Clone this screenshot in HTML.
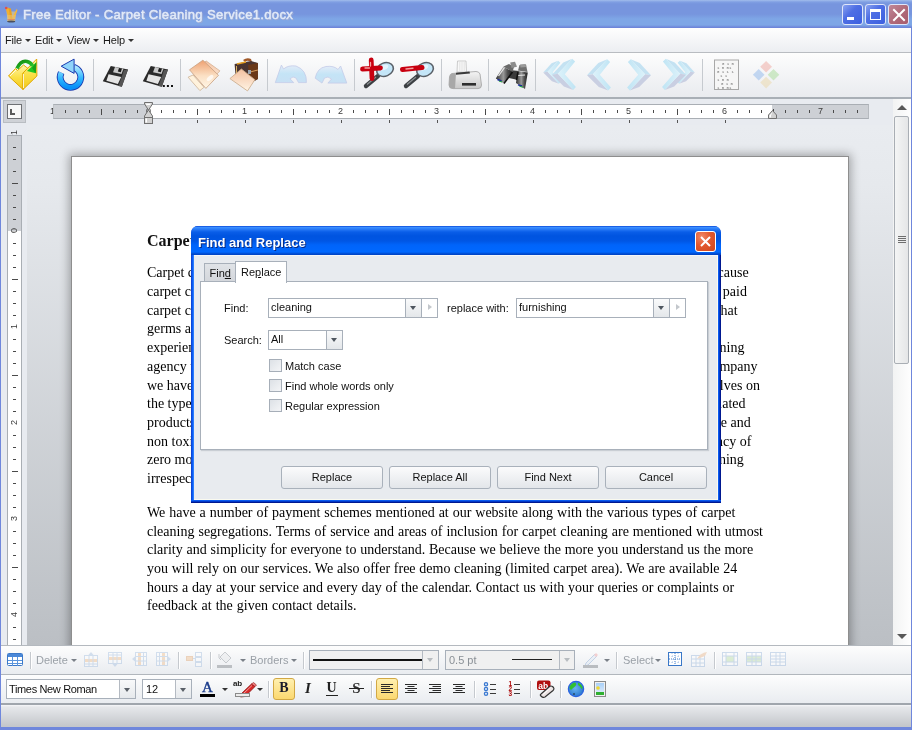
<!DOCTYPE html>
<html><head><meta charset="utf-8">
<style>
*{margin:0;padding:0;box-sizing:border-box}
html,body{width:912px;height:730px;overflow:hidden;background:#fff;}body{will-change:transform;font-family:"Liberation Sans",sans-serif;font-size:11px;color:#000}
.a{position:absolute}
#title{left:0;top:0;width:912px;height:28px;background:linear-gradient(#a2bdec 0px,#809fe3 2px,#7795de 4px,#7795de 14px,#7ea6e6 19px,#7ea6e6 25px,#7089db 27px,#6b82d8 28px)}
#frameL{left:0;top:28px;width:1px;height:702px;background:#6f87dc}
#frameR{left:911px;top:28px;width:1px;height:702px;background:#6f87dc}
#frameB{left:0;top:727px;width:912px;height:3px;background:#6f87dc}
#menu{left:1px;top:28px;width:910px;height:25px;background:linear-gradient(#fefefe,#eceef2);border-bottom:1px solid #b9bcc1}
#tb{left:1px;top:53px;width:910px;height:46px;background:linear-gradient(#fdfdfd,#e9ebef);border-bottom:2px solid #a9afb6}
#rulerrow{left:1px;top:99px;width:910px;height:26px;background:#e8ebf0}
#docbg{left:27px;top:125px;width:866px;height:520px;background:linear-gradient(#e9ecf0 0px,#e6e9ed 60px,#bbbfc4 520px)}
#leftcol{left:1px;top:125px;width:26px;height:520px;background:#e8ebf0}
#page{left:71px;top:156px;width:778px;height:500px;background:#fff;border:1px solid #8e8e8e;border-bottom:none;box-shadow:0 0 9px 2px rgba(0,0,0,.3)}
#vscroll{left:893px;top:99px;width:18px;height:546px;background:linear-gradient(90deg,#f0f1f2,#fdfdfd);border-left:1px solid #c4c8cd}
#tb1{left:1px;top:645px;width:910px;height:30px;background:linear-gradient(#fdfdfd,#e9ecf0);border-top:1px solid #b4b9bf;border-bottom:1px solid #b1b6bc}
#tb2{left:1px;top:675px;width:910px;height:30px;background:linear-gradient(#fdfdfd,#e9ecf0);border-bottom:2px solid #a0a6ad}
#status{left:1px;top:705px;width:910px;height:22px;background:linear-gradient(#f6f7f9 0px,#e6e8eb 2px,#c4c7cb 21px)}
.txt{font-family:"Liberation Serif",serif;font-size:14px;white-space:pre;line-height:18.7px;color:#000}
.wbtn{width:21px;height:21px;border:1px solid #dfe6fa;border-radius:3px;overflow:hidden}
.menu{top:34px;font:11px 'Liberation Sans';color:#1a1a1a;white-space:pre;letter-spacing:-.2px}
.dd{width:0;height:0;border-left:3px solid transparent;border-right:3px solid transparent;border-top:3px solid #333}
.dl{font:11px 'Liberation Sans';color:#111;white-space:pre;line-height:13px}
.combo{height:20px;background:#fff;border:1px solid #a8b0ba}
.cbtn{top:0;width:16px;height:18px;border-left:1px solid #a8b0ba;background:linear-gradient(#f9fafb,#e4e7ea)}
.tri{width:0;height:0;border-left:3.5px solid transparent;border-right:3.5px solid transparent;border-top:4px solid #4e565f}
.rtri{width:0;height:0;border-top:3.5px solid transparent;border-bottom:3.5px solid transparent;border-left:4px solid #c3c7cc}
.chk{width:13px;height:13px;border:1px solid #a6aeb8;background:linear-gradient(135deg,#dde1e6,#f4f5f7)}
.btn{width:102px;height:23px;border:1px solid #a9b1bb;border-radius:3px;background:linear-gradient(#fbfbfc,#e3e6ea);font:11px 'Liberation Sans';color:#111;text-align:center;line-height:21px}
.rnum{font:9px 'Liberation Sans';color:#3a3a3a;width:7px;text-align:center;line-height:11px}
.sep{width:2px;height:17px;border-left:1px solid #c5c9ce;border-right:1px solid #fff}
.tbt{font:11px 'Liberation Sans';white-space:pre;line-height:13px}
.dis{color:#9aa0a7}
.dd2{width:0;height:0;border-left:3px solid transparent;border-right:3px solid transparent;border-top:3px solid #7a8088}
.tri2{width:0;height:0;border-left:3.5px solid transparent;border-right:3.5px solid transparent;border-top:4px solid #b8bcc0}
</style></head><body>
<div id="title" class="a"></div>
<div id="frameL" class="a"></div>
<div id="frameR" class="a"></div>
<div id="menu" class="a"></div>
<div id="tb" class="a"></div>
<div id="rulerrow" class="a"></div>
<div id="docbg" class="a"></div>
<div id="leftcol" class="a"></div>
<div id="page" class="a"></div>
<!-- rulers -->
<div class="a rnum" style="left:49px;top:106px">1</div>
<div class="a" style="left:3px;top:100px;width:23px;height:23px;background:#cfd2d7;border:1px solid #b9bdc2"></div>
<div class="a" style="left:7px;top:104px;width:15px;height:15px;background:#f8f8f8;border:1px solid #6e7074"></div>
<div class="a" style="left:10px;top:109px;width:2px;height:6px;background:#5a5a5a"></div><div class="a" style="left:10px;top:113px;width:5px;height:2px;background:#5a5a5a"></div>
<div class="a" style="left:53px;top:104px;width:816px;height:15px;background:#cdd0d5;border-top:1px solid #a9aeb4;border-bottom:1px solid #a9aeb4;border-left:1px solid #c0c4c8;border-right:1px solid #b6babf"></div>
<div class="a" style="left:149px;top:105px;width:623px;height:13px;background:#fff"></div>
<div class="a" style="left:65px;top:110px;width:1px;height:3px;background:#4a4a4a"></div>
<div class="a" style="left:77px;top:110px;width:1px;height:3px;background:#4a4a4a"></div>
<div class="a" style="left:89px;top:110px;width:1px;height:3px;background:#4a4a4a"></div>
<div class="a" style="left:101px;top:109px;width:1px;height:6px;background:#4a4a4a"></div>
<div class="a" style="left:113px;top:110px;width:1px;height:3px;background:#4a4a4a"></div>
<div class="a" style="left:125px;top:110px;width:1px;height:3px;background:#4a4a4a"></div>
<div class="a" style="left:137px;top:110px;width:1px;height:3px;background:#4a4a4a"></div>
<div class="a rnum" style="left:145px;top:106px">0</div>
<div class="a" style="left:161px;top:110px;width:1px;height:3px;background:#4a4a4a"></div>
<div class="a" style="left:173px;top:110px;width:1px;height:3px;background:#4a4a4a"></div>
<div class="a" style="left:185px;top:110px;width:1px;height:3px;background:#4a4a4a"></div>
<div class="a" style="left:197px;top:109px;width:1px;height:6px;background:#4a4a4a"></div>
<div class="a" style="left:209px;top:110px;width:1px;height:3px;background:#4a4a4a"></div>
<div class="a" style="left:221px;top:110px;width:1px;height:3px;background:#4a4a4a"></div>
<div class="a" style="left:233px;top:110px;width:1px;height:3px;background:#4a4a4a"></div>
<div class="a rnum" style="left:241px;top:106px">1</div>
<div class="a" style="left:257px;top:110px;width:1px;height:3px;background:#4a4a4a"></div>
<div class="a" style="left:269px;top:110px;width:1px;height:3px;background:#4a4a4a"></div>
<div class="a" style="left:281px;top:110px;width:1px;height:3px;background:#4a4a4a"></div>
<div class="a" style="left:293px;top:109px;width:1px;height:6px;background:#4a4a4a"></div>
<div class="a" style="left:305px;top:110px;width:1px;height:3px;background:#4a4a4a"></div>
<div class="a" style="left:317px;top:110px;width:1px;height:3px;background:#4a4a4a"></div>
<div class="a" style="left:329px;top:110px;width:1px;height:3px;background:#4a4a4a"></div>
<div class="a rnum" style="left:337px;top:106px">2</div>
<div class="a" style="left:353px;top:110px;width:1px;height:3px;background:#4a4a4a"></div>
<div class="a" style="left:365px;top:110px;width:1px;height:3px;background:#4a4a4a"></div>
<div class="a" style="left:377px;top:110px;width:1px;height:3px;background:#4a4a4a"></div>
<div class="a" style="left:389px;top:109px;width:1px;height:6px;background:#4a4a4a"></div>
<div class="a" style="left:401px;top:110px;width:1px;height:3px;background:#4a4a4a"></div>
<div class="a" style="left:413px;top:110px;width:1px;height:3px;background:#4a4a4a"></div>
<div class="a" style="left:425px;top:110px;width:1px;height:3px;background:#4a4a4a"></div>
<div class="a rnum" style="left:433px;top:106px">3</div>
<div class="a" style="left:449px;top:110px;width:1px;height:3px;background:#4a4a4a"></div>
<div class="a" style="left:461px;top:110px;width:1px;height:3px;background:#4a4a4a"></div>
<div class="a" style="left:473px;top:110px;width:1px;height:3px;background:#4a4a4a"></div>
<div class="a" style="left:485px;top:109px;width:1px;height:6px;background:#4a4a4a"></div>
<div class="a" style="left:497px;top:110px;width:1px;height:3px;background:#4a4a4a"></div>
<div class="a" style="left:509px;top:110px;width:1px;height:3px;background:#4a4a4a"></div>
<div class="a" style="left:521px;top:110px;width:1px;height:3px;background:#4a4a4a"></div>
<div class="a rnum" style="left:529px;top:106px">4</div>
<div class="a" style="left:545px;top:110px;width:1px;height:3px;background:#4a4a4a"></div>
<div class="a" style="left:557px;top:110px;width:1px;height:3px;background:#4a4a4a"></div>
<div class="a" style="left:569px;top:110px;width:1px;height:3px;background:#4a4a4a"></div>
<div class="a" style="left:581px;top:109px;width:1px;height:6px;background:#4a4a4a"></div>
<div class="a" style="left:593px;top:110px;width:1px;height:3px;background:#4a4a4a"></div>
<div class="a" style="left:605px;top:110px;width:1px;height:3px;background:#4a4a4a"></div>
<div class="a" style="left:617px;top:110px;width:1px;height:3px;background:#4a4a4a"></div>
<div class="a rnum" style="left:625px;top:106px">5</div>
<div class="a" style="left:641px;top:110px;width:1px;height:3px;background:#4a4a4a"></div>
<div class="a" style="left:653px;top:110px;width:1px;height:3px;background:#4a4a4a"></div>
<div class="a" style="left:665px;top:110px;width:1px;height:3px;background:#4a4a4a"></div>
<div class="a" style="left:677px;top:109px;width:1px;height:6px;background:#4a4a4a"></div>
<div class="a" style="left:689px;top:110px;width:1px;height:3px;background:#4a4a4a"></div>
<div class="a" style="left:701px;top:110px;width:1px;height:3px;background:#4a4a4a"></div>
<div class="a" style="left:713px;top:110px;width:1px;height:3px;background:#4a4a4a"></div>
<div class="a rnum" style="left:721px;top:106px">6</div>
<div class="a" style="left:737px;top:110px;width:1px;height:3px;background:#4a4a4a"></div>
<div class="a" style="left:749px;top:110px;width:1px;height:3px;background:#4a4a4a"></div>
<div class="a" style="left:761px;top:110px;width:1px;height:3px;background:#4a4a4a"></div>
<div class="a" style="left:773px;top:109px;width:1px;height:6px;background:#4a4a4a"></div>
<div class="a" style="left:785px;top:110px;width:1px;height:3px;background:#4a4a4a"></div>
<div class="a" style="left:797px;top:110px;width:1px;height:3px;background:#4a4a4a"></div>
<div class="a" style="left:809px;top:110px;width:1px;height:3px;background:#4a4a4a"></div>
<div class="a rnum" style="left:817px;top:106px">7</div>
<div class="a" style="left:833px;top:110px;width:1px;height:3px;background:#4a4a4a"></div>
<div class="a" style="left:845px;top:110px;width:1px;height:3px;background:#4a4a4a"></div>
<div class="a" style="left:857px;top:110px;width:1px;height:3px;background:#4a4a4a"></div>
<div class="a" style="left:197px;top:120px;width:1px;height:3px;background:#555"></div>
<div class="a" style="left:245px;top:120px;width:1px;height:3px;background:#555"></div>
<div class="a" style="left:293px;top:120px;width:1px;height:3px;background:#555"></div>
<div class="a" style="left:341px;top:120px;width:1px;height:3px;background:#555"></div>
<div class="a" style="left:389px;top:120px;width:1px;height:3px;background:#555"></div>
<div class="a" style="left:437px;top:120px;width:1px;height:3px;background:#555"></div>
<div class="a" style="left:485px;top:120px;width:1px;height:3px;background:#555"></div>
<div class="a" style="left:533px;top:120px;width:1px;height:3px;background:#555"></div>
<div class="a" style="left:581px;top:120px;width:1px;height:3px;background:#555"></div>
<div class="a" style="left:629px;top:120px;width:1px;height:3px;background:#555"></div>
<div class="a" style="left:677px;top:120px;width:1px;height:3px;background:#555"></div>
<div class="a" style="left:725px;top:120px;width:1px;height:3px;background:#555"></div>
<svg class="a" style="left:144px;top:102px" width="10" height="22" viewBox="0 0 10 22">
<path d="M0.5 0.5 H8.5 V2 L4.5 8 L0.5 2 Z" fill="#d2d2d2" stroke="#707070"/>
<path d="M4.5 8 L8.5 14 V15.5 H0.5 V14 Z" fill="#d2d2d2" stroke="#707070"/>
<rect x="0.5" y="15.5" width="8" height="6" fill="#d2d2d2" stroke="#707070"/>
<path d="M1.5 1.5 H7 L6 3 H2.5Z M1.5 16.5 V20.5 H3 V16.5Z" fill="#fff"/>
</svg>
<svg class="a" style="left:768px;top:110px" width="10" height="9" viewBox="0 0 10 9">
<path d="M4.5 0.5 L8.5 5 V8.5 H0.5 V5 Z" fill="#d2d2d2" stroke="#707070"/>
<path d="M4.5 2 L1.5 5.5 V7.5 H3 V5.5Z" fill="#fff"/>
</svg>
<div class="a" style="left:7px;top:135px;width:15px;height:520px;background:#fff;border-left:1px solid #a9aeb4;border-right:1px solid #a9aeb4;border-top:1px solid #a9aeb4"></div>
<div class="a" style="left:8px;top:136px;width:13px;height:95px;background:#cdd0d5"></div>
<div class="a" style="left:13px;top:147px;width:3px;height:1px;background:#4a4a4a"></div>
<div class="a" style="left:13px;top:159px;width:3px;height:1px;background:#4a4a4a"></div>
<div class="a" style="left:13px;top:171px;width:3px;height:1px;background:#4a4a4a"></div>
<div class="a" style="left:12px;top:183px;width:6px;height:1px;background:#4a4a4a"></div>
<div class="a" style="left:13px;top:195px;width:3px;height:1px;background:#4a4a4a"></div>
<div class="a" style="left:13px;top:207px;width:3px;height:1px;background:#4a4a4a"></div>
<div class="a" style="left:13px;top:219px;width:3px;height:1px;background:#4a4a4a"></div>
<div class="a rnum" style="left:11px;top:225px;transform:rotate(-90deg)">0</div>
<div class="a" style="left:13px;top:243px;width:3px;height:1px;background:#4a4a4a"></div>
<div class="a" style="left:13px;top:255px;width:3px;height:1px;background:#4a4a4a"></div>
<div class="a" style="left:13px;top:267px;width:3px;height:1px;background:#4a4a4a"></div>
<div class="a" style="left:12px;top:279px;width:6px;height:1px;background:#4a4a4a"></div>
<div class="a" style="left:13px;top:291px;width:3px;height:1px;background:#4a4a4a"></div>
<div class="a" style="left:13px;top:303px;width:3px;height:1px;background:#4a4a4a"></div>
<div class="a" style="left:13px;top:315px;width:3px;height:1px;background:#4a4a4a"></div>
<div class="a rnum" style="left:11px;top:321px;transform:rotate(-90deg)">1</div>
<div class="a" style="left:13px;top:339px;width:3px;height:1px;background:#4a4a4a"></div>
<div class="a" style="left:13px;top:351px;width:3px;height:1px;background:#4a4a4a"></div>
<div class="a" style="left:13px;top:363px;width:3px;height:1px;background:#4a4a4a"></div>
<div class="a" style="left:12px;top:375px;width:6px;height:1px;background:#4a4a4a"></div>
<div class="a" style="left:13px;top:387px;width:3px;height:1px;background:#4a4a4a"></div>
<div class="a" style="left:13px;top:399px;width:3px;height:1px;background:#4a4a4a"></div>
<div class="a" style="left:13px;top:411px;width:3px;height:1px;background:#4a4a4a"></div>
<div class="a rnum" style="left:11px;top:417px;transform:rotate(-90deg)">2</div>
<div class="a" style="left:13px;top:435px;width:3px;height:1px;background:#4a4a4a"></div>
<div class="a" style="left:13px;top:447px;width:3px;height:1px;background:#4a4a4a"></div>
<div class="a" style="left:13px;top:459px;width:3px;height:1px;background:#4a4a4a"></div>
<div class="a" style="left:12px;top:471px;width:6px;height:1px;background:#4a4a4a"></div>
<div class="a" style="left:13px;top:483px;width:3px;height:1px;background:#4a4a4a"></div>
<div class="a" style="left:13px;top:495px;width:3px;height:1px;background:#4a4a4a"></div>
<div class="a" style="left:13px;top:507px;width:3px;height:1px;background:#4a4a4a"></div>
<div class="a rnum" style="left:11px;top:513px;transform:rotate(-90deg)">3</div>
<div class="a" style="left:13px;top:531px;width:3px;height:1px;background:#4a4a4a"></div>
<div class="a" style="left:13px;top:543px;width:3px;height:1px;background:#4a4a4a"></div>
<div class="a" style="left:13px;top:555px;width:3px;height:1px;background:#4a4a4a"></div>
<div class="a" style="left:12px;top:567px;width:6px;height:1px;background:#4a4a4a"></div>
<div class="a" style="left:13px;top:579px;width:3px;height:1px;background:#4a4a4a"></div>
<div class="a" style="left:13px;top:591px;width:3px;height:1px;background:#4a4a4a"></div>
<div class="a" style="left:13px;top:603px;width:3px;height:1px;background:#4a4a4a"></div>
<div class="a rnum" style="left:11px;top:609px;transform:rotate(-90deg)">4</div>
<div class="a" style="left:13px;top:627px;width:3px;height:1px;background:#4a4a4a"></div>
<div class="a" style="left:13px;top:639px;width:3px;height:1px;background:#4a4a4a"></div>
<div class="a rnum" style="left:11px;top:127px;transform:rotate(-90deg)">1</div>


<!-- doc text -->
<div class="a" style="left:147px;top:231.6px;font:bold 16px 'Liberation Serif';line-height:18px;white-space:pre;color:#111">Carpet Cleaning Service</div>
<div class="a txt" style="left:147px;top:264.3px">Carpet cleaning is</div>
<div class="a txt" style="left:147px;top:283.0px">carpet cleaning</div>
<div class="a txt" style="left:147px;top:301.7px">carpet cleaning</div>
<div class="a txt" style="left:147px;top:320.4px">germs and</div>
<div class="a txt" style="left:147px;top:339.1px">experienced</div>
<div class="a txt" style="left:147px;top:357.8px">agency with</div>
<div class="a txt" style="left:147px;top:376.5px">we have</div>
<div class="a txt" style="left:147px;top:395.2px">the types</div>
<div class="a txt" style="left:147px;top:413.9px">products</div>
<div class="a txt" style="left:147px;top:432.6px">non toxic</div>
<div class="a txt" style="left:147px;top:451.3px">zero moisture</div>
<div class="a txt" style="left:147px;top:470.0px">irrespective</div>
<div class="a txt" style="right:163.4px;top:264.3px;text-align:right">because</div>
<div class="a txt" style="right:165.1px;top:283.0px;text-align:right">paid</div>
<div class="a txt" style="right:174.3px;top:301.7px;text-align:right">that</div>
<div class="a txt" style="right:167.5px;top:339.1px;text-align:right">cleaning</div>
<div class="a txt" style="right:154.5px;top:357.8px;text-align:right">company</div>
<div class="a txt" style="right:152.1px;top:376.5px;text-align:right">themselves on</div>
<div class="a txt" style="right:166.5px;top:395.2px;text-align:right">formulated</div>
<div class="a txt" style="right:161.3px;top:413.9px;text-align:right">safe and</div>
<div class="a txt" style="right:160.6px;top:432.6px;text-align:right">efficacy of</div>
<div class="a txt" style="right:168.2px;top:451.3px;text-align:right">cleaning</div>
<div class="a txt" style="left:147px;top:503.9px;word-spacing:0.44px">We have a number of payment schemes mentioned at our website along with the various types of carpet</div>
<div class="a txt" style="left:147px;top:522.6px;word-spacing:0.51px">cleaning segregations. Terms of service and areas of inclusion for carpet cleaning are mentioned with utmost</div>
<div class="a txt" style="left:147px;top:541.3px;word-spacing:0.30px">clarity and simplicity for everyone to understand. Because we believe the more you understand us the more</div>
<div class="a txt" style="left:147px;top:560.0px;word-spacing:0.22px">you will rely on our services. We also offer free demo cleaning (limited carpet area). We are available 24</div>
<div class="a txt" style="left:147px;top:578.7px;word-spacing:0.29px">hours a day at your service and every day of the calendar. Contact us with your queries or complaints or</div>
<div class="a txt" style="left:147px;top:597.4px;word-spacing:0.54px">feedback at the given contact details.</div>

<!-- dialog -->
<div class="a" id="dlg" style="left:191px;top:226px;width:530px;height:277px;background:#0a3fd0;border-radius:7px 7px 0 0;overflow:hidden">
 <div class="a" style="left:0;top:0;width:530px;height:29px;background:linear-gradient(#0a48d8 0px,#3a8eff 1.5px,#2a7cf8 3px,#0a5ee8 6px,#0054e0 10px,#0056e4 15px,#0064fa 19px,#0068ff 26px,#0050d8 27.5px,#0040c0 29px)"></div>
 <div class="a" style="left:0;top:29px;width:3px;height:248px;background:linear-gradient(90deg,#0a46d8 0,#0a46d8 33%,#0c5cf4 33%,#0c5cf4 66%,#2a7cff 66%)"></div>
 <div class="a" style="left:527px;top:29px;width:3px;height:248px;background:linear-gradient(90deg,#0a5af0 0,#0a5af0 33%,#0038c8 33%,#0038c8 66%,#001890 66%)"></div>
 <div class="a" style="left:0;top:274px;width:530px;height:3px;background:linear-gradient(#0a5af0 0,#0a5af0 33%,#0038c8 33%,#0038c8 66%,#001890 66%)"></div>
 <div class="a" style="left:3px;top:29px;width:524px;height:245px;background:#e8ebef;border-top:1px solid #f4f6f8;border-right:1px solid #fafaf4;border-bottom:1px solid #fafaf0"></div>
 <div class="a" style="left:8px;top:9.5px;font:bold 13px 'Liberation Sans';color:#0a2a80;white-space:pre">Find and Replace</div>
 <div class="a" style="left:7px;top:8.5px;font:bold 13px 'Liberation Sans';color:#fff;white-space:pre">Find and Replace</div>
 <div class="a" style="left:504px;top:5px;width:21px;height:21px;border:1px solid #fff;border-radius:3px;background:radial-gradient(circle at 30% 25%,#f08868 0%,#e2582e 45%,#d0461c 100%)">
  <svg class="a" style="left:3px;top:3px" width="13" height="13" viewBox="0 0 13 13"><path d="M2 2 L11 11 M11 2 L2 11" stroke="#fff" stroke-width="2"/></svg>
 </div>
 <!-- tabs -->
 <div class="a" style="left:13px;top:37px;width:32px;height:19px;background:linear-gradient(#e0e3e7,#d3d6db);border:1px solid #a8b0ba;border-bottom:none"></div>
 <div class="a dl" style="left:18.5px;top:40.5px">Fin<u>d</u></div>
 <div class="a" style="left:9px;top:55px;width:508px;height:169px;background:#fff;border:1px solid #a8b0ba;box-shadow:1px 1px 1px #c9ced4"></div>
 <div class="a" style="left:44px;top:35px;width:52px;height:22px;background:#fff;border:1px solid #a8b0ba;border-bottom:none"></div>
 <div class="a dl" style="left:50px;top:40px">Re<u>p</u>lace</div>
 <!-- fields -->
 <div class="a dl" style="left:33px;top:76px">Find:</div>
 <div class="a combo" style="left:77px;top:72px;width:170px">
   <div class="a" style="left:2px;top:2px" ><span class="dl">cleaning</span></div>
   <div class="a cbtn" style="left:136px"><div class="a tri" style="left:4px;top:7px"></div></div>
   <div class="a" style="left:152px;top:0;width:16px;height:18px;border-left:1px solid #a8b0ba"><div class="a rtri" style="left:6px;top:5px"></div></div>
 </div>
 <div class="a dl" style="left:256px;top:76px">replace with:</div>
 <div class="a combo" style="left:325px;top:72px;width:170px">
   <div class="a" style="left:2px;top:2px"><span class="dl">furnishing</span></div>
   <div class="a cbtn" style="left:136px"><div class="a tri" style="left:4px;top:7px"></div></div>
   <div class="a" style="left:152px;top:0;width:16px;height:18px;border-left:1px solid #a8b0ba"><div class="a rtri" style="left:6px;top:5px"></div></div>
 </div>
 <div class="a dl" style="left:33px;top:108px">Search:</div>
 <div class="a combo" style="left:77px;top:104px;width:75px">
   <div class="a" style="left:2px;top:2px"><span class="dl">All</span></div>
   <div class="a cbtn" style="left:57px;width:16px;border-right:none"><div class="a tri" style="left:4px;top:7px"></div></div>
 </div>
 <div class="a chk" style="left:78px;top:133px"></div><div class="a dl" style="left:94px;top:134px">Match case</div>
 <div class="a chk" style="left:78px;top:153px"></div><div class="a dl" style="left:94px;top:154px">Find whole words only</div>
 <div class="a chk" style="left:78px;top:173px"></div><div class="a dl" style="left:94px;top:174px">Regular expression</div>
 <!-- buttons -->
 <div class="a btn" style="left:90px;top:240px">Replace</div>
 <div class="a btn" style="left:198px;top:240px">Replace All</div>
 <div class="a btn" style="left:306px;top:240px">Find Next</div>
 <div class="a btn" style="left:414px;top:240px">Cancel</div>
</div>

<div class="a" style="left:893px;top:99px;width:18px;height:546px;background:linear-gradient(90deg,#f2f3f3,#fefefe)"></div>
<div class="a" style="left:897px;top:105px;width:0;height:0;border-left:5px solid transparent;border-right:5px solid transparent;border-bottom:5px solid #585858"></div>
<div class="a" style="left:897px;top:634px;width:0;height:0;border-left:5px solid transparent;border-right:5px solid transparent;border-top:5px solid #585858"></div>
<div class="a" style="left:894px;top:116px;width:15px;height:248px;border:1px solid #a9aeb4;border-radius:2px;background:linear-gradient(90deg,#f4f5f5,#e5e6e7)"></div>
<div class="a" style="left:898px;top:236px;width:8px;height:1px;background:#6e6e6e;box-shadow:0 2px 0 #6e6e6e,0 4px 0 #6e6e6e,0 6px 0 #6e6e6e"></div>

<div id="tb1" class="a"></div>
<div id="tb2" class="a"></div>
<div id="status" class="a"></div>

<!-- title -->
<svg class="a" style="left:4px;top:6px" width="14" height="17" viewBox="0 0 14 17">
<path d="M2.5 5.5 L12 5.5 L11 15.5 L3.5 15.5 Z" fill="#d8c890" opacity=".7"/>
<path d="M1.5 2 L5 14 L7.5 14 L4.5 1.5 Z" fill="#f2b030"/>
<path d="M12.5 3 L7.5 14 L10 14 L13.5 4 Z" fill="#f6b838"/>
<path d="M4.5 2 L6.5 13 L8.5 13 L7 2.5 Z" fill="#eaa020"/>
<path d="M3 9 L11.8 9 L11 15.5 L3.5 15.5 Z" fill="#e8c070" opacity=".6"/>
<circle cx="2.2" cy="2" r="1.3" fill="#e05050"/>
<ellipse cx="7.2" cy="15.5" rx="4" ry="1.1" fill="#4a5060"/>
<path d="M3.5 13.5 H11" stroke="#d06060" stroke-width=".8" opacity=".6"/>
</svg>
<div class="a" style="left:24px;top:8px;font:13px 'Liberation Sans';letter-spacing:.35px;-webkit-text-stroke:.45px #98a8d4;color:#98a8d4;white-space:pre">Free Editor - Carpet Cleaning Service1.docx</div>
<div class="a" style="left:23px;top:7px;font:13px 'Liberation Sans';letter-spacing:.35px;-webkit-text-stroke:.45px #e2eaf8;color:#e2eaf8;white-space:pre">Free Editor - Carpet Cleaning Service1.docx</div>
<div class="a wbtn" style="left:842px;top:4px;background:linear-gradient(135deg,#8aa3f0 0%,#4f6fe4 40%,#3c5fe0 100%)"><div class="a" style="left:4px;top:12px;width:7px;height:3px;background:#fff"></div></div>
<div class="a wbtn" style="left:865px;top:4px;background:linear-gradient(135deg,#8aa3f0 0%,#4f6fe4 40%,#3c5fe0 100%)"><div class="a" style="left:4px;top:4px;width:11px;height:11px;border:1px solid #fff;border-top-width:3px"></div></div>
<div class="a wbtn" style="left:888px;top:4px;background:linear-gradient(135deg,#c08898 0%,#b06a7a 50%,#a85c6c 100%)">
<svg class="a" style="left:3px;top:3px" width="14" height="14" viewBox="0 0 14 14"><path d="M2 2 L12 12 M12 2 L2 12" stroke="#fff" stroke-width="2" stroke-linecap="square"/></svg></div>
<!-- menu -->
<div class="a menu" style="left:5px">File</div><div class="a dd" style="left:25px;top:39px"></div>
<div class="a menu" style="left:35px">Edit</div><div class="a dd" style="left:56px;top:39px"></div>
<div class="a menu" style="left:67px">View</div><div class="a dd" style="left:93px;top:39px"></div>
<div class="a menu" style="left:103px">Help</div><div class="a dd" style="left:128px;top:39px"></div>


<!-- top toolbar icons -->
<svg class="a" style="left:0;top:53px" width="800" height="44" viewBox="0 53 800 44">
<defs>
<linearGradient id="fy" x1="0" y1="0" x2="0" y2="1"><stop offset="0" stop-color="#fff4a8"/><stop offset=".5" stop-color="#fbe048"/><stop offset="1" stop-color="#f2c818"/></linearGradient>
<linearGradient id="fg" x1="0" y1="0" x2="1" y2="1"><stop offset="0" stop-color="#108a10"/><stop offset="1" stop-color="#30d030"/></linearGradient>
<linearGradient id="rb" x1="0" y1="0" x2="0" y2="1"><stop offset="0" stop-color="#a8e4ff"/><stop offset=".55" stop-color="#30b8ff"/><stop offset="1" stop-color="#0890f8"/></linearGradient>
<linearGradient id="pg" x1="0" y1="0" x2="0" y2="1"><stop offset="0" stop-color="#eea070"/><stop offset=".55" stop-color="#fbe0c4"/><stop offset="1" stop-color="#fff6e6"/></linearGradient>
<linearGradient id="pb" x1="0" y1="0" x2="0" y2="1"><stop offset="0" stop-color="#f4c0a0"/><stop offset="1" stop-color="#fff4e4"/></linearGradient>
<linearGradient id="ub" x1="0" y1="0" x2="0" y2="1"><stop offset="0" stop-color="#e4ecf8"/><stop offset=".5" stop-color="#c4e4f6"/><stop offset="1" stop-color="#c8e0f4"/></linearGradient>
<linearGradient id="pr" x1="0" y1="0" x2="0" y2="1"><stop offset="0" stop-color="#f4f4f4"/><stop offset="1" stop-color="#c8c8c8"/></linearGradient>
<linearGradient id="chv" x1="0" y1="0" x2="1" y2="0"><stop offset="0" stop-color="#bfe0f0"/><stop offset="1" stop-color="#d8f0fa"/></linearGradient>
</defs>
<!-- separators -->
<g stroke="#c6cacf" stroke-width="1">
<path d="M46.5 59 V91 M93.5 59 V91 M180.5 59 V91 M267.5 59 V91 M354.5 59 V91 M441.5 59 V91 M488.5 59 V91 M535.5 59 V91 M702.5 59 V91"/>
</g>
<!-- open folder -->
<path d="M8.5 76 L15.5 68.5 L17.5 70.5 L23.5 65 L28 68.5 L23 73 L23 89.5 Z" fill="url(#fy)" stroke="#e0a800" stroke-width="1"/>
<path d="M23 73 L36.7 59 L36.9 76 L23 89.5 Z" fill="url(#fy)" stroke="#e0a800" stroke-width="1"/>
<path d="M10 76 L16 70 M23.5 74 V88" stroke="#fff" stroke-width="1" opacity=".8"/>
<path d="M17 68.5 Q21 60 27 61.5 Q31 62.5 32.5 66" fill="none" stroke="url(#fg)" stroke-width="3.6"/>
<path d="M36.3 62.3 L35.8 73.3 L27 70.9 Z" fill="#22c822"/>
<path d="M36.3 62.3 L35.8 73.3 L32 68 Z" fill="#18a018"/>
<!-- refresh -->
<path d="M61.2 72.6 A10.3 10.3 0 1 0 73.8 67.3" fill="none" stroke="#1a3cb0" stroke-width="6.8"/>
<path d="M61.2 72.6 A10.3 10.3 0 1 0 73.8 67.3" fill="none" stroke="url(#rb)" stroke-width="5"/>
<path d="M61.2 66.2 L74.1 59.1 L74.1 73.4 Z" fill="#90d4fa" stroke="#1a3cb0" stroke-width="1"/>
<!-- save -->
<g id="flop">
<path d="M110.8 66 L128 69.5 L121.8 86.8 L102.8 81.3 Z" fill="#2a2a2a"/>
<path d="M115 67 L123.5 68.7 L121.5 74 L113 72.3 Z" fill="#c8c8c8"/>
<path d="M119 68 L122 68.6 L120.8 72.2 L117.8 71.6Z" fill="#1a1a1a"/>
<path d="M108.6 74.2 L121.2 76.9 L117.9 84 L106.4 80.8 Z" fill="#e4e4e4"/>
<path d="M124 70 L128 69.5 L121.8 86.8 L118.5 86 Z" fill="#555"/>
</g>
<use href="#flop" x="40" y="0"/>
<rect x="162.8" y="85" width="2" height="2" fill="#111"/><rect x="166.9" y="85" width="2" height="2" fill="#111"/><rect x="171" y="85" width="2" height="2" fill="#111"/>
<!-- pages -->
<path d="M188.1 77.2 L193 75 L204 87.3 L199.9 90.6 Z" fill="#fff2dc" stroke="#cdb498" stroke-width=".8"/>
<path d="M206.2 61 L219.9 70.9 L210 81 L196 68 Z" fill="url(#pb)" stroke="#d4b090" stroke-width=".8"/>
<path d="M202.9 60.2 L218.5 75.3 L205.9 88.4 L189.5 69.8 Z" fill="url(#pg)" stroke="#c8a080" stroke-width=".8"/>
<ellipse cx="210" cy="78" rx="4" ry="2" fill="#fff" opacity=".7" transform="rotate(-40 210 78)"/>
<!-- briefcase -->
<path d="M243 60 Q247 57 251 59 L252 62 L249 61 Q247 60 245 62 Z" fill="#a05828"/>
<path d="M234.6 64 L251 61 L257.9 63 L257.9 79 L251 83 L236 81 Z" fill="#4a3430"/>
<path d="M248 65 L257.9 63 L257.9 79 L250 83 Z" fill="#6a3818"/>
<path d="M250 72 L257.9 70" stroke="#d8a060" stroke-width="1"/>
<path d="M237 64 L246 62" stroke="#e8a020" stroke-width="1.4"/>
<path d="M236.5 66 V78" stroke="#d8b060" stroke-width="1"/>
<rect x="248" y="70" width="3" height="4" fill="#9aa4b0"/>
<path d="M229.9 78.6 L241.4 69 L254.9 79.7 L247.5 90.9 Z" fill="url(#pb)" stroke="#c8a888" stroke-width=".8"/>
<!-- undo/redo disabled -->
<path d="M281.4 65.1 L275.3 82.6 L293.7 82.6 L290 78.8 Q293 75.5 296 78 L298.5 82.6 L306.4 82.6 Q307 70 296 66 Q288 65 283.6 69 Z" fill="url(#ub)" stroke="#c4cce8" stroke-width=".8"/>
<path d="M340.6 66 L346.8 83.1 L327.9 83.1 L331.5 79 Q328 75.5 324.5 78 L322 83.1 L315.2 78.2 Q317 68 326 66.5 Q334 65.5 338 69.5 Z" fill="url(#ub)" stroke="#c4cce8" stroke-width=".8"/>
<!-- zoom in -->
<g id="zin">
<path d="M366 86 L378 76" stroke="#3c4044" stroke-width="4.4" stroke-linecap="round"/>
<path d="M367 84.5 L376 77" stroke="#8a8e92" stroke-width="1.2"/>
<ellipse cx="385" cy="69.5" rx="9.4" ry="7.4" fill="#5a6068" transform="rotate(-22 385 69.5)"/>
<ellipse cx="385" cy="69.5" rx="7.8" ry="5.9" fill="#c4e6f8" transform="rotate(-22 385 69.5)"/>
<ellipse cx="384" cy="67.5" rx="4.5" ry="2.4" fill="#eef8ff" opacity=".8" transform="rotate(-22 384 67.5)"/>
</g>
<path d="M362.5 69 L380.5 68" stroke="#c80010" stroke-width="4.8" stroke-linecap="round"/>
<path d="M371.2 60 L372 78.5" stroke="#c80010" stroke-width="4.8" stroke-linecap="round"/>
<path d="M365 68 H369.5 M370.5 62.5 V66" stroke="#f4a0a0" stroke-width="1.3" stroke-linecap="round"/>
<!-- zoom out -->
<use href="#zin" x="40" y="0"/>
<path d="M402.5 69.5 L422 67.5" stroke="#c80010" stroke-width="5" stroke-linecap="round"/>
<path d="M406 69 L413 68.2" stroke="#f4a0a0" stroke-width="1.4" stroke-linecap="round"/>
<!-- printer -->
<path d="M457.5 61 H466 L466.5 72 H457 Z" fill="#f8f8f8" stroke="#c0c0c0" stroke-width=".8"/>
<path d="M459.8 62 V71 M462 62 V71 M464.2 62 V71" stroke="#d4d4d4" stroke-width=".6"/>
<path d="M452 73.5 L476 71.5 Q479 71.5 480 74 L481.5 85 Q481.5 88.6 478 88.6 L453 88.6 Q449 88.6 449 85 L449.5 77 Q450 73.8 452 73.5 Z" fill="url(#pr)" stroke="#a0a0a0" stroke-width=".8"/>
<path d="M449.5 77 Q450 73.8 452 73.5 L456 73.2 L455 88.6 L453 88.6 Q449 88.6 449 85 Z" fill="#a8a8a8"/>
<path d="M456 72.8 L469.5 71.6 L470 73.6 L456 74.8Z" fill="#3a3a3a"/>
<rect x="462" y="83" width="14" height="2.6" fill="#2e2e2e"/>
<!-- binoculars -->
<defs><linearGradient id="bn" x1="0" y1="0" x2="1" y2="0"><stop offset="0" stop-color="#303030"/><stop offset=".45" stop-color="#9a9a9a"/><stop offset=".7" stop-color="#505050"/><stop offset="1" stop-color="#202020"/></linearGradient></defs>
<g transform="translate(492 58)">
<path d="M17 12 L27 13 L26 22 L17 20 Z" fill="#3a3a3a"/>
<path d="M3.8 20.5 L11.5 8.5 L20.5 14 L12 25.5 Z" fill="url(#bn)"/>
<path d="M11.5 8.5 L17 6 L22 9 L20.5 14 Z" fill="#6a6a6a"/>
<path d="M18.2 4.5 L23 3.8 L25 8.8 L19.5 10 Z" fill="#8c8c8c"/>
<path d="M24 25 L25.5 13 L35.8 14.5 L33 31 Z" fill="url(#bn)"/>
<path d="M26 12.5 L27.5 7 L34 6.5 L35.5 14 Z" fill="#707070"/>
<path d="M28 6.5 L33.5 6 L34 9 L28.5 9.5Z" fill="#9a9a9a"/>
<path d="M6.5 18 L12.5 9.5" stroke="#e8e8e8" stroke-width="1.3"/>
<path d="M25.5 17.5 L33 17" stroke="#e8e8e8" stroke-width="1.2"/>
<path d="M12 25.5 L20.5 14" stroke="#111" stroke-width="1.5"/>
<path d="M24.5 22 L26 14" stroke="#111" stroke-width="1.5"/>
<path d="M5.5 21.5 L9.5 23" stroke="#1a2aa0" stroke-width="1.4"/><path d="M7 23 L10 24" stroke="#20a040" stroke-width="1.2"/>
<path d="M26 26.8 L30 28" stroke="#1a2aa0" stroke-width="1.4"/><path d="M27.5 28.2 L31 29.3" stroke="#20a040" stroke-width="1.2"/>
</g>
<!-- chevrons -->
<defs>
<linearGradient id="cf" x1="0" y1="0" x2="1" y2="0"><stop offset="0" stop-color="#dcf2fa"/><stop offset="1" stop-color="#bfe4f4"/></linearGradient>
<g id="chev1">
<path d="M3 18.3 L14.3 5.9 L23.2 2.2 L8.9 17.3 Z" fill="#c4e2f2"/>
<path d="M3 18.3 L8.9 17.3 L24.2 33.5 L14.8 30.1 Z" fill="#c9cfe2"/>
<path d="M8.9 17.3 L23.2 2.2 L26.1 4.9 L15.8 17.8 L26.9 30.6 L24.2 33.5 Z" fill="url(#cf)"/>
</g>
<g id="chev2">
<g transform="translate(-43 2) scale(.74)"><use href="#chev1"/></g>
<use href="#chev1" x="-35" y="-0.5"/>
</g>
</defs>
<g transform="translate(584 57)"><use href="#chev1"/><use href="#chev2"/></g>
<g transform="translate(1238 0) scale(-1 1) translate(584 57)"><use href="#chev1"/><use href="#chev2"/></g>
<!-- binary doc -->
<rect x="714.5" y="60" width="24" height="29.5" fill="#f6f6f6" stroke="#a8a8a8"/>
<g fill="#707070" font-family="'Liberation Mono',monospace" font-size="4">
<text x="722" y="65">0 1  0</text><text x="717" y="69">1 0 01</text><text x="717" y="73">0 1 1 1</text><text x="720" y="77">1 1</text><text x="717" y="81">1 0 0</text><text x="721" y="85">0 1  0</text><text x="717" y="89">1 0 01</text>
</g>
<!-- color diamond -->
<g opacity=".5">
<path d="M766.1 61 L772 66.8 L766.1 72.6 L760.2 66.8Z" fill="#f0a8a0"/>
<path d="M758.7 68.9 L764.5 74.7 L758.7 80.5 L752.9 74.7Z" fill="#90b8ec"/>
<path d="M773.5 68.9 L779.3 74.7 L773.5 80.5 L767.7 74.7Z" fill="#a8dc98"/>
<path d="M766.1 76.8 L772 82.6 L766.1 88.4 L760.2 82.6Z" fill="#ecd8a8"/>
</g>
</svg>
<!-- bottom toolbar 1 -->
<svg class="a" style="left:7px;top:653px" width="17" height="14" viewBox="0 0 17 14">
<rect x="0.5" y="0.5" width="15" height="12" rx="1" fill="#fff" stroke="#3a78c8"/>
<rect x="1" y="1" width="14" height="3" fill="#4a88d8"/>
<path d="M1 7.5 H15 M1 10.5 H15 M5.5 4 V13 M10.5 4 V13" stroke="#5a94dc" stroke-width="1"/>
</svg>
<div class="a sep" style="left:30px;top:652px"></div>
<div class="a tbt dis" style="left:36px;top:654px">Delete</div><div class="a dd2" style="left:71px;top:659px"></div>
<svg class="a" style="left:84px;top:652px" width="14" height="15" viewBox="0 0 14 15" opacity=".35">
<rect x="0.5" y="3.5" width="13" height="11" fill="#fff" stroke="#8fb0d8"/><rect x="1" y="7" width="12" height="3" fill="#f0b070"/><path d="M7 0 L4.5 3 H9.5Z" fill="#8fb0d8"/><path d="M1 12 H13 M5 4 V14 M9 4 V14" stroke="#8fb0d8"/></svg>
<svg class="a" style="left:108px;top:652px" width="14" height="15" viewBox="0 0 14 15" opacity=".35">
<rect x="0.5" y="0.5" width="13" height="11" fill="#fff" stroke="#8fb0d8"/><rect x="1" y="5" width="12" height="3" fill="#f0b070"/><path d="M7 15 L4.5 12 H9.5Z" fill="#8fb0d8"/><path d="M1 3 H13 M5 1 V11 M9 1 V11" stroke="#8fb0d8"/></svg>
<svg class="a" style="left:132px;top:652px" width="15" height="15" viewBox="0 0 15 15" opacity=".35">
<rect x="3.5" y="0.5" width="11" height="13" fill="#fff" stroke="#8fb0d8"/><rect x="6" y="1" width="3" height="12" fill="#f0b070"/><path d="M0 7 L3 4.5 V9.5Z" fill="#8fb0d8"/><path d="M4 4.5 H14 M4 9 H14 M11.5 1 V13" stroke="#8fb0d8"/></svg>
<svg class="a" style="left:156px;top:652px" width="15" height="15" viewBox="0 0 15 15" opacity=".35">
<rect x="0.5" y="0.5" width="11" height="13" fill="#fff" stroke="#8fb0d8"/><rect x="6" y="1" width="3" height="12" fill="#f0b070"/><path d="M15 7 L12 4.5 V9.5Z" fill="#8fb0d8"/><path d="M1 4.5 H11 M1 9 H11 M3.5 1 V13" stroke="#8fb0d8"/></svg>
<div class="a sep" style="left:178px;top:652px"></div>
<svg class="a" style="left:186px;top:652px" width="16" height="15" viewBox="0 0 16 15" opacity=".35">
<rect x="0.5" y="4.5" width="6" height="4" fill="#f0b070" stroke="#d89050"/><rect x="9.5" y="0.5" width="6" height="4" fill="#fff" stroke="#8fb0d8"/><rect x="9.5" y="5.5" width="6" height="4" fill="#fff" stroke="#8fb0d8"/><rect x="9.5" y="10.5" width="6" height="4" fill="#fff" stroke="#8fb0d8"/><path d="M7 6.5 H9" stroke="#8fb0d8"/></svg>
<div class="a sep" style="left:210px;top:652px"></div>
<svg class="a" style="left:217px;top:651px" width="16" height="18" viewBox="0 0 16 18" opacity=".5">
<path d="M3 6 L8 1 L14 7 L9 12 Z" fill="#e8eaec" stroke="#9aa0a6"/><path d="M2 3 Q1 8 4 9" stroke="#9aa0a6" fill="none"/><rect x="0" y="14" width="15" height="3" fill="#8a8f94"/></svg>
<div class="a dd2" style="left:240px;top:659px"></div>
<div class="a tbt dis" style="left:250px;top:654px">Borders</div><div class="a dd2" style="left:291px;top:659px"></div>
<div class="a sep" style="left:303px;top:652px"></div>
<div class="a" style="left:309px;top:650px;width:130px;height:20px;background:#f0f0f0;border:1px solid #a8b0ba"></div>
<div class="a" style="left:313px;top:659px;width:109px;height:2px;background:#111"></div>
<div class="a" style="left:422px;top:651px;width:1px;height:18px;background:#b4bac2"></div>
<div class="a tri2" style="left:427px;top:658px"></div>
<div class="a" style="left:445px;top:650px;width:130px;height:20px;background:#f0f0f0;border:1px solid #a8b0ba"></div>
<div class="a tbt" style="left:449px;top:654px;color:#8a9096">0.5 pt</div>
<div class="a" style="left:512px;top:659px;width:40px;height:1px;background:#222"></div>
<div class="a" style="left:559px;top:651px;width:1px;height:18px;background:#b4bac2"></div>
<div class="a tri2" style="left:564px;top:658px"></div>
<svg class="a" style="left:583px;top:651px" width="15" height="18" viewBox="0 0 15 18" opacity=".45">
<path d="M3 12 L12 3 L14 5 L5 14 L2 15 Z" fill="#dfe8f4" stroke="#8aa8d0"/><path d="M11 4 L13 2 L15 4 L13 6Z" fill="#f0a0a0"/><rect x="0" y="14" width="15" height="3" fill="#7a7f84"/></svg>
<div class="a dd2" style="left:604px;top:659px"></div>
<div class="a sep" style="left:616px;top:652px"></div>
<div class="a tbt dis" style="left:623px;top:654px">Select</div><div class="a dd2" style="left:655px;top:659px"></div>
<svg class="a" style="left:668px;top:652px" width="14" height="15" viewBox="0 0 14 15">
<rect x="0.5" y="0.5" width="13" height="13" fill="#fff" stroke="#3a78c8"/><path d="M1 7 H13 M7 1 V13" stroke="#3a78c8" stroke-dasharray="1 1"/><path d="M1 4 H13 M1 10 H13 M4 1 V13 M10 1 V13" stroke="#a8c4e8" stroke-dasharray="1 2"/></svg>
<svg class="a" style="left:691px;top:651px" width="17" height="17" viewBox="0 0 17 17" opacity=".4">
<rect x="0.5" y="4.5" width="13" height="11" fill="#fff" stroke="#8fb0d8"/><path d="M1 8 H13 M1 12 H13 M5 5 V15 M9 5 V15" stroke="#8fb0d8"/><path d="M6 8 Q9 2 16 1 L14 5 Z" fill="#e8b080"/></svg>
<div class="a sep" style="left:714px;top:652px"></div>
<svg class="a" style="left:722px;top:652px" width="16" height="15" viewBox="0 0 16 15" opacity=".4">
<rect x="0.5" y="0.5" width="15" height="13" fill="#fff" stroke="#8fb0d8"/><rect x="4" y="4" width="8" height="6" fill="#b8e0a0"/><path d="M1 4 H15 M1 10 H15 M4 1 V13 M12 1 V13" stroke="#8fb0d8"/></svg>
<svg class="a" style="left:746px;top:652px" width="16" height="15" viewBox="0 0 16 15" opacity=".4">
<rect x="0.5" y="0.5" width="15" height="13" fill="#fff" stroke="#8fb0d8"/><rect x="1" y="4" width="14" height="6" fill="#b8e0a0"/><path d="M1 4 H15 M1 7 H15 M1 10 H15 M6 1 V13 M10 1 V13" stroke="#8fb0d8"/></svg>
<svg class="a" style="left:770px;top:652px" width="16" height="15" viewBox="0 0 16 15" opacity=".4">
<rect x="0.5" y="0.5" width="15" height="13" fill="#fff" stroke="#8fb0d8"/><path d="M1 4 H15 M1 7 H15 M1 10 H15 M6 1 V13 M10 1 V13" stroke="#8fb0d8"/></svg>
<!-- bottom toolbar 2 -->
<div class="a" style="left:6px;top:679px;width:130px;height:20px;background:#fff;border:1px solid #a8b0ba"></div>
<div class="a tbt" style="left:9px;top:683px;letter-spacing:-0.35px;color:#111">Times New Roman</div>
<div class="a" style="left:119px;top:680px;width:16px;height:18px;border-left:1px solid #b4bac2;background:linear-gradient(#f8f9fa,#e6e9ec)"></div>
<div class="a tri2" style="left:124px;top:688px;border-top-color:#5a6068"></div>
<div class="a" style="left:142px;top:679px;width:50px;height:20px;background:#fff;border:1px solid #a8b0ba"></div>
<div class="a tbt" style="left:146px;top:683px;color:#111">12</div>
<div class="a" style="left:175px;top:680px;width:16px;height:18px;border-left:1px solid #b4bac2;background:linear-gradient(#f8f9fa,#e6e9ec)"></div>
<div class="a tri2" style="left:180px;top:688px;border-top-color:#5a6068"></div>
<div class="a" style="left:200px;top:679px;width:15px;text-align:center;font:15px 'Liberation Serif';color:#1b3c8c;line-height:16px;-webkit-text-stroke:.4px #1b3c8c">A</div>
<div class="a" style="left:200px;top:694px;width:15px;height:3px;background:#000"></div>
<div class="a dd2" style="left:222px;top:688px;border-top-color:#333"></div>
<div class="a" style="left:233px;top:679px;font:bold 8px 'Liberation Sans';color:#222;line-height:9px;letter-spacing:-.3px">ab</div>
<svg class="a" style="left:234px;top:682px" width="24" height="16" viewBox="0 0 24 16">
<path d="M7 12 L17.5 2 L21 4.5 L11 14.5 L6.5 15Z" fill="#d82828" stroke="#8a1010" stroke-width=".8"/><path d="M17.5 2 L19.5 .5 L22.5 3 L21 4.5Z" fill="#f08080" stroke="#8a1010" stroke-width=".6"/><path d="M9 12 L18 3.5" stroke="#f6a0a0" stroke-width="1"/>
<rect x="1.5" y="11.5" width="14" height="3" fill="#ececec" stroke="#8a8a8a"/></svg>
<div class="a dd2" style="left:257px;top:688px;border-top-color:#333"></div>
<div class="a sep" style="left:268px;top:681px;height:17px"></div>
<div class="a" style="left:273px;top:678px;width:22px;height:22px;border:1px solid #d2a844;border-radius:3px;background:linear-gradient(#fff0b0,#fbd870)"></div>
<div class="a" style="left:273px;top:680px;width:22px;text-align:center;font:bold 14px 'Liberation Serif';color:#1a1a2a;line-height:16px">B</div>
<div class="a" style="left:302px;top:680px;width:12px;text-align:center;font:italic bold 15px 'Liberation Serif';color:#222;line-height:16px">I</div>
<div class="a" style="left:325px;top:680px;width:13px;text-align:center;font:bold 14px 'Liberation Serif';color:#222;line-height:16px">U</div>
<div class="a" style="left:326px;top:695px;width:12px;height:1px;background:#222"></div>
<div class="a" style="left:349px;top:680px;width:15px;text-align:center;font:bold 15px 'Liberation Serif';color:#333;line-height:16px">S</div>
<div class="a" style="left:349px;top:688px;width:15px;height:1px;background:#222"></div>
<div class="a sep" style="left:371px;top:681px;height:17px"></div>
<div class="a" style="left:376px;top:678px;width:22px;height:22px;border:1px solid #d2a844;border-radius:3px;background:linear-gradient(#fff0b0,#fbd870)"></div>
<svg class="a" style="left:378px;top:683px" width="92" height="12" viewBox="378 683 92 12">
<g stroke="#2a2a2a" stroke-width="1">
<path d="M381 684.5 H393 M381 686.5 H390 M381 688.5 H393 M381 690.5 H390 M381 692.5 H393"/>
<path d="M405 684.5 H417 M407.5 686.5 H414.5 M405 688.5 H417 M407.5 690.5 H414.5 M405 692.5 H417"/>
<path d="M429 684.5 H441 M432.5 686.5 H441 M429 688.5 H441 M432.5 690.5 H441 M429 692.5 H441"/>
<path d="M453 684.5 H465 M455.5 686.5 H462.5 M453 688.5 H465 M455.5 690.5 H462.5 M453 692.5 H465"/>
</g></svg>
<div class="a sep" style="left:474px;top:681px;height:17px"></div>
<svg class="a" style="left:478px;top:676px" width="50" height="26" viewBox="478 676 50 26">
<g fill="#e8f0fa" stroke="#3a78d0" stroke-width="1.3"><circle cx="486" cy="684.3" r="1.6"/><circle cx="486" cy="689" r="1.6"/><circle cx="486" cy="693.7" r="1.6"/></g>
<path d="M490 684.5 H496 M490 689.5 H496 M490 693.5 H496" stroke="#3a3a3a" stroke-width="1.2"/>
<g font-family="'Liberation Sans',sans-serif" font-weight="bold" font-size="6.5" fill="#b01010"><text x="508.5" y="686">1</text><text x="508.5" y="691">2</text><text x="508.5" y="696">3</text></g>
<path d="M514 684.5 H520 M514 689.5 H520 M514 693.5 H520" stroke="#3a3a3a" stroke-width="1.2"/>
</svg>
<div class="a sep" style="left:530px;top:681px;height:17px"></div>
<svg class="a" style="left:536px;top:680px" width="19" height="18" viewBox="0 0 19 18">
<rect x="1" y="0.5" width="13.5" height="9.5" rx="2" fill="#b01010"/><text x="2.2" y="8.6" font-family="'Liberation Sans',sans-serif" font-weight="bold" font-size="8.5" fill="#fff">ab</text>
<path d="M5 14 L13.5 6.5 Q15 5.5 16.5 6.5 L17.5 7.5 Q18.5 9 17 10.5 L9 17 Q7 18 5.5 16.5 L4.5 15.5 Q4 14.8 5 14Z" fill="#ece4e4" stroke="#333" stroke-width="1.2"/>
<path d="M7 14.5 L14.5 8" stroke="#fff" stroke-width="1"/></svg>
<div class="a sep" style="left:560px;top:681px;height:17px"></div>
<svg class="a" style="left:567px;top:680px" width="18" height="18" viewBox="0 0 18 18">
<defs><radialGradient id="gl" cx="45%" cy="45%" r="60%"><stop offset="0" stop-color="#6ab4f0"/><stop offset=".7" stop-color="#3a88d8"/><stop offset="1" stop-color="#2a70c8"/></radialGradient></defs>
<circle cx="9" cy="9" r="7.6" fill="url(#gl)" stroke="#2a62e0" stroke-width="1.3"/>
<path d="M2.5 7 Q4 3 8 2.5 Q10 4 8.5 6 Q6 8 4 10 Q2.5 9.5 2.5 7Z M11 2.8 Q15 4 15.8 8 L14.5 9 Q13 6 11 5Z" fill="#30c030"/>
<circle cx="7" cy="14" r=".8" fill="#1a1a1a"/>
</svg>
<svg class="a" style="left:594px;top:681px" width="12" height="16" viewBox="0 0 12 16">
<defs><linearGradient id="sky" x1="0" y1="0" x2="0" y2="1"><stop offset="0" stop-color="#a8d0f8"/><stop offset="1" stop-color="#e8f0fa"/></linearGradient></defs>
<rect x="0.5" y="0.5" width="11" height="15" fill="#f0f0f0" stroke="#8a8a8a"/><rect x="2" y="2" width="8" height="12" fill="url(#sky)"/><circle cx="4" cy="7" r="1.8" fill="#f0d830"/><rect x="2" y="11" width="8" height="3" fill="#30b030"/></svg>
<div id="frameB" class="a"></div>
</body></html>
